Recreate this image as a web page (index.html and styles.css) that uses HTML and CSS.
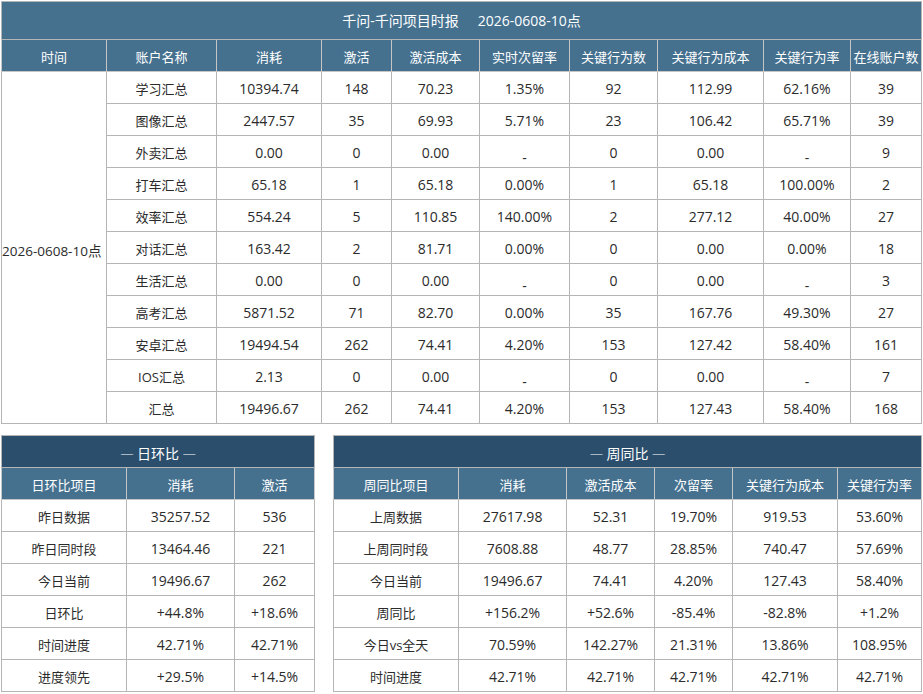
FILE: index.html
```html
<!DOCTYPE html>
<html lang="zh">
<head>
<meta charset="utf-8">
<title>千问-千问项目时报</title>
<link rel="stylesheet" href="styles.css">
</head>
<body>
<div class="page">
  <table class="grid main">
    <colgroup>
      <col style="width:105px"><col style="width:110px"><col style="width:105px"><col style="width:70px"><col style="width:88px"><col style="width:90px"><col style="width:88px"><col style="width:106px"><col style="width:87px"><col style="width:71px">
    </colgroup>
    <thead>
      <tr class="title-row"><th colspan="10">千问-千问项目时报<span class="title-date">2026-0608-10点</span></th></tr>
      <tr class="head-row">
        <th>时间</th><th>账户名称</th><th>消耗</th><th>激活</th><th>激活成本</th><th>实时次留率</th><th>关键行为数</th><th>关键行为成本</th><th>关键行为率</th><th>在线账户数</th>
      </tr>
    </thead>
    <tbody>
      <tr><td rowspan="11" class="time-cell">2026-0608-10点</td><td class="name">学习汇总</td><td>10394.74</td><td>148</td><td>70.23</td><td>1.35%</td><td>92</td><td>112.99</td><td>62.16%</td><td>39</td></tr>
      <tr><td class="name">图像汇总</td><td>2447.57</td><td>35</td><td>69.93</td><td>5.71%</td><td>23</td><td>106.42</td><td>65.71%</td><td>39</td></tr>
      <tr><td class="name">外卖汇总</td><td>0.00</td><td>0</td><td>0.00</td><td><span class="nil">-</span></td><td>0</td><td>0.00</td><td><span class="nil">-</span></td><td>9</td></tr>
      <tr><td class="name">打车汇总</td><td>65.18</td><td>1</td><td>65.18</td><td>0.00%</td><td>1</td><td>65.18</td><td>100.00%</td><td>2</td></tr>
      <tr><td class="name">效率汇总</td><td>554.24</td><td>5</td><td>110.85</td><td>140.00%</td><td>2</td><td>277.12</td><td>40.00%</td><td>27</td></tr>
      <tr><td class="name">对话汇总</td><td>163.42</td><td>2</td><td>81.71</td><td>0.00%</td><td>0</td><td>0.00</td><td>0.00%</td><td>18</td></tr>
      <tr><td class="name">生活汇总</td><td>0.00</td><td>0</td><td>0.00</td><td><span class="nil">-</span></td><td>0</td><td>0.00</td><td><span class="nil">-</span></td><td>3</td></tr>
      <tr><td class="name">高考汇总</td><td>5871.52</td><td>71</td><td>82.70</td><td>0.00%</td><td>35</td><td>167.76</td><td>49.30%</td><td>27</td></tr>
      <tr><td class="name">安卓汇总</td><td>19494.54</td><td>262</td><td>74.41</td><td>4.20%</td><td>153</td><td>127.42</td><td>58.40%</td><td>161</td></tr>
      <tr><td class="name">IOS汇总</td><td>2.13</td><td>0</td><td>0.00</td><td><span class="nil">-</span></td><td>0</td><td>0.00</td><td><span class="nil">-</span></td><td>7</td></tr>
      <tr><td class="name">汇总</td><td>19496.67</td><td>262</td><td>74.41</td><td>4.20%</td><td>153</td><td>127.43</td><td>58.40%</td><td>168</td></tr>
    </tbody>
  </table>

  <div class="bottom">
    <table class="grid small day">
      <colgroup><col style="width:125px"><col style="width:108px"><col style="width:80px"></colgroup>
      <thead>
        <tr class="sub-title"><th colspan="3">― 日环比 ―</th></tr>
        <tr class="head-row"><th>日环比项目</th><th>消耗</th><th>激活</th></tr>
      </thead>
      <tbody>
        <tr><td class="name">昨日数据</td><td>35257.52</td><td>536</td></tr>
        <tr><td class="name">昨日同时段</td><td>13464.46</td><td>221</td></tr>
        <tr><td class="name">今日当前</td><td>19496.67</td><td>262</td></tr>
        <tr><td class="name">日环比</td><td>+44.8%</td><td>+18.6%</td></tr>
        <tr><td class="name">时间进度</td><td>42.71%</td><td>42.71%</td></tr>
        <tr><td class="name">进度领先</td><td>+29.5%</td><td>+14.5%</td></tr>
      </tbody>
    </table>

    <table class="grid small week">
      <colgroup><col style="width:125px"><col style="width:108px"><col style="width:88px"><col style="width:78px"><col style="width:105px"><col style="width:84px"></colgroup>
      <thead>
        <tr class="sub-title"><th colspan="6">― 周同比 ―</th></tr>
        <tr class="head-row"><th>周同比项目</th><th>消耗</th><th>激活成本</th><th>次留率</th><th>关键行为成本</th><th>关键行为率</th></tr>
      </thead>
      <tbody>
        <tr><td class="name">上周数据</td><td>27617.98</td><td>52.31</td><td>19.70%</td><td>919.53</td><td>53.60%</td></tr>
        <tr><td class="name">上周同时段</td><td>7608.88</td><td>48.77</td><td>28.85%</td><td>740.47</td><td>57.69%</td></tr>
        <tr><td class="name">今日当前</td><td>19496.67</td><td>74.41</td><td>4.20%</td><td>127.43</td><td>58.40%</td></tr>
        <tr><td class="name">周同比</td><td>+156.2%</td><td>+52.6%</td><td>-85.4%</td><td>-82.8%</td><td>+1.2%</td></tr>
        <tr><td class="name">今日vs全天</td><td>70.59%</td><td>142.27%</td><td>21.31%</td><td>13.86%</td><td>108.95%</td></tr>
        <tr><td class="name">时间进度</td><td>42.71%</td><td>42.71%</td><td>42.71%</td><td>42.71%</td><td>42.71%</td></tr>
      </tbody>
    </table>
  </div>
</div>
</body>
</html>
```

FILE: styles.css
```css
html, body {
  margin: 0;
  padding: 0;
  background: #ffffff;
}

body {
  font-family: "Open Sans", "Noto Sans CJK SC", sans-serif;
  font-size: 13px;
  color: #2b2b2b;
}

.page {
  padding: 1px;
  display: flex;
  flex-direction: column;
  gap: 11px;
}

.grid {
  border-collapse: collapse;
  table-layout: fixed;
}

.grid th,
.grid td {
  border: 1px solid #b5b5b5;
  padding: 3px 0 0;
  text-align: center;
  white-space: nowrap;
  font-weight: normal;
  height: 28px;
  line-height: 28px;
}

.grid td {
  font-size: 14px;
}

.grid td.name {
  font-size: 13px;
}

.main {
  width: 921px;
}

.title-row th {
  background: #45718f;
  color: #ffffff;
  font-size: 14px;
  padding: 1px 0 0;
  height: 36px;
  line-height: 36px;
  border-color: #b5b5b5;
}

.title-date {
  margin-left: 19px;
}

.head-row th {
  background: #45718f;
  color: #ffffff;
  border-color: #c6c6c6;
}

.grid td.time-cell {
  overflow: visible;
  text-align: left;
  font-size: 13.5px;
  padding: 6px 0 0 0;
}

.nil {
  display: inline-block;
  transform: translateY(5px);
}

.bottom {
  display: flex;
  gap: 18px;
  align-items: flex-start;
}

.day {
  width: 314px;
}

.week {
  width: 589px;
}

.sub-title th {
  background: #2b4e6c;
  color: #ffffff;
  font-family: "Noto Sans CJK SC", sans-serif;
  font-size: 14px;
}
```
